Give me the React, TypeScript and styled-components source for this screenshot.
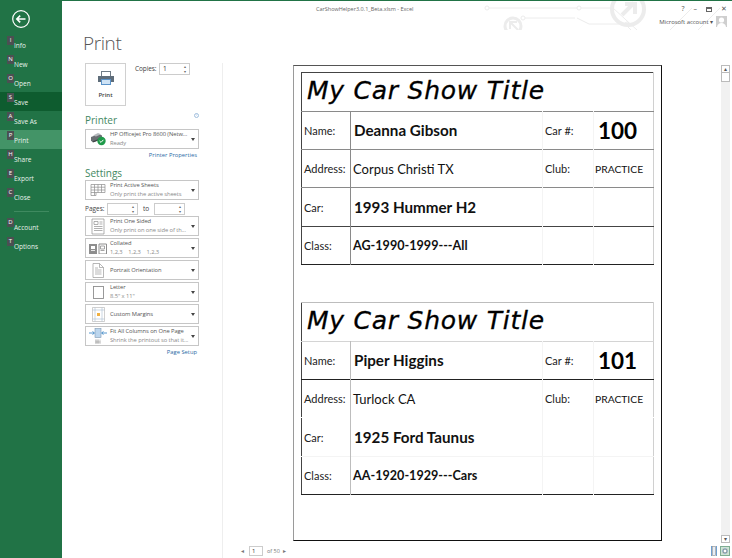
import React from "react";
import styled, { createGlobalStyle } from "styled-components";

const GlobalStyle = createGlobalStyle`
  html, body {
    margin: 0;
    padding: 0;
    background: #fff;
    overflow: hidden;
  }
  * {
    box-sizing: border-box;
  }
`;

const UI_FONT = `"Open Sans", "Noto Sans", sans-serif`;
const SHEET_FONT = `Lato, "Open Sans", sans-serif`;

const BackIcon = () => (
  <svg width="20" height="20" viewBox="0 0 20 20" fill="none" stroke="#fff">
    <circle cx="10" cy="10" r="8.3" strokeWidth="1.2" />
    <path d="M14.5 10H6M9.2 6.6 5.8 10l3.4 3.4" strokeWidth="1.6" />
  </svg>
);

const PrintIcon = () => (
  <svg width="16" height="14" viewBox="0 0 16 14">
    <rect x="3.5" y="0.5" width="9" height="5" fill="#fff" stroke="#6f7b86" />
    <path d="M0 5h16v6h-3V8.5H3V11H0z" fill="#5f6d7a" />
    <rect x="3.5" y="8.5" width="9" height="5" fill="#cfe3f5" stroke="#5b93c9" />
  </svg>
);

const DeviceIcon = () => (
  <svg width="17" height="14" viewBox="0 0 17 14">
    <path d="M1 5l8-3 3 1.5v3L4 10l-3-1z" fill="#6a6f73" />
    <path d="M3 3.5l5-2.5 3 1.3-5 2.2z" fill="#b5b9bc" />
    <path d="M2 9.5l8-3 1 1-8 3z" fill="#3f4447" />
    <circle cx="11.5" cy="9" r="4.2" fill="#1f9a4a" />
    <path d="M9.6 9l1.4 1.4 2.4-2.6" fill="none" stroke="#fff" strokeWidth="1" />
  </svg>
);

const SheetsIcon = () => (
  <svg width="16" height="14" viewBox="0 0 16 14" fill="none" stroke="#8c8c8c" strokeWidth="0.7">
    <path d="M1 1.5h14v8H6v3H1zM1 4.2h14M1 7h14M4.5 1.5v11M8 1.5v8M11.5 1.5v8M1 9.5h5" />
  </svg>
);

const OneSidedIcon = () => (
  <svg width="14" height="17" viewBox="0 0 14 17" fill="none" stroke="#8f8f8f" strokeWidth="0.7">
    <path d="M1 1h12v15H1z" />
    <path d="M3 3.5h4v3H3zM8.5 4h3M8.5 6h3M3 8.5h8.5M3 10.5h8.5M3 12.5h8.5" />
  </svg>
);

const CollatedIcon = () => (
  <svg width="18" height="11" viewBox="0 0 18 11">
    <path d="M0 1h8v10H0z" fill="#8e8e8e" />
    <path d="M2 3h4v3H2z" fill="#fff" />
    <path d="M10 1h7.5v10H10z" fill="#fff" stroke="#8e8e8e" />
    <path d="M11.5 3h4v3h-4zM11.5 7.5h4" fill="none" stroke="#8e8e8e" strokeWidth="0.8" />
    <path d="M2 7.5h4" stroke="#fff" strokeWidth="0.8" />
  </svg>
);

const PortraitIcon = () => (
  <svg width="12" height="15" viewBox="0 0 12 15" fill="none" stroke="#9a9a9a" strokeWidth="0.7">
    <path d="M1 .5h6.5l4 4v10H1zM7.5.5v4h4" />
    <path d="M3 5h3M3 7h6.5M3 9h6.5M3 11h6.5" />
  </svg>
);

const LetterIcon = () => (
  <svg width="11" height="13" viewBox="0 0 11 13" fill="none" stroke="#8f8f8f" strokeWidth="0.9">
    <rect x="0.5" y="0.5" width="10" height="12" />
  </svg>
);

const MarginsIcon = () => (
  <svg width="13" height="15" viewBox="0 0 13 15" fill="none" stroke="#a9bdd0" strokeWidth="0.6">
    <path d="M.5.5h12v14H.5z" stroke="#b0b0b0" />
    <path d="M3 .5v14M10 .5v14M.5 3h12M.5 12h12" />
    <rect x="5" y="6" width="3" height="3" fill="#f0b041" stroke="none" />
  </svg>
);

const FitIcon = () => (
  <svg width="18" height="17" viewBox="0 0 18 17" fill="none">
    <rect x="6" y="0.5" width="6" height="9" fill="#bcd6ee" stroke="#7d98b3" strokeWidth="0.6" />
    <path d="M0 5h5M3.5 3.5 5.5 5l-2 1.5M18 5h-5M14.5 3.5 12.5 5l2 1.5" stroke="#2f7fc1" strokeWidth="0.8" />
    <path d="M6 11.5h6V16H6z" fill="#e3e3e3" />
    <path d="M7 11.5v4M9 11.5v4M6.5 14h5" stroke="#8f8f8f" strokeWidth="0.5" />
  </svg>
);

const navTop = [
  { key: "I", label: "Info" },
  { key: "N", label: "New" },
  { key: "O", label: "Open" },
  { key: "S", label: "Save", state: "hover" },
  { key: "A", label: "Save As" },
  { key: "P", label: "Print", state: "active" },
  { key: "H", label: "Share" },
  { key: "E", label: "Export" },
  { key: "C", label: "Close" },
];

const navBottom = [
  { key: "D", label: "Account" },
  { key: "T", label: "Options" },
];

const settings = [
  { id: "sheets", icon: <SheetsIcon />, title: "Print Active Sheets", sub: "Only print the active sheets" },
  { id: "sided", icon: <OneSidedIcon />, title: "Print One Sided", sub: "Only print on one side of th..." },
  { id: "collated", icon: <CollatedIcon />, title: "Collated", sub: "1,2,3    1,2,3    1,2,3" },
  { id: "portrait", icon: <PortraitIcon />, title: "Portrait Orientation" },
  { id: "letter", icon: <LetterIcon />, title: "Letter", sub: '8.5" x 11"' },
  { id: "margins", icon: <MarginsIcon />, title: "Custom Margins" },
  { id: "fit", icon: <FitIcon />, title: "Fit All Columns on One Page", sub: "Shrink the printout so that it..." },
];

const DARK = "#444";
const MID = "#8a8a8a";
const LIGHT = "#d4d4d4";
const FAINT = "#f4f4f4";

const cards = [
  {
    name: "Deanna Gibson",
    number: "100",
    address: "Corpus Christi TX",
    car: "1993 Hummer H2",
    carClass: "AG-1990-1999---All",
    top: DARK,
    lines: [MID, MID, MID, DARK],
    nameCol: MID,
  },
  {
    name: "Piper Higgins",
    number: "101",
    address: "Turlock CA",
    car: "1925 Ford Taunus",
    carClass: "AA-1920-1929---Cars",
    top: "#bdbdbd",
    lines: [LIGHT, "#222", "#fff", FAINT],
    nameCol: "#bdbdbd",
  },
];

const columnWidths = [49, 192, 51, 60];

const App: React.FC = () => {
  return (
    <Window>
      <GlobalStyle />
      <Sidebar>
        <BackButton>
          <BackIcon />
        </BackButton>
        {navTop.map((item) => (
          <NavItem key={item.key} $state={item.state}>
            <KeyTip>{item.key}</KeyTip>
            {item.label}
          </NavItem>
        ))}
        <NavDivider />
        {navBottom.map((item) => (
          <NavItem key={item.key}>
            <KeyTip>{item.key}</KeyTip>
            {item.label}
          </NavItem>
        ))}
      </Sidebar>

      <Main>
        <TitleBar>
          <Circuit width="252" height="29" viewBox="0 0 252 29" fill="none" stroke="#ececec">
            <circle cx="7" cy="7" r="2" />
            <path d="M9 7h88" />
            <circle cx="99" cy="7" r="2" />
            <path d="M101 7h32l24 22" />
            <circle cx="33" cy="25" r="8" strokeWidth="3" />
            <path d="M30 28v-7h7M30 21l8 8" strokeWidth="2" />
            <circle cx="43" cy="17" r="2" />
            <path d="M45 17h50M97 17l12 6h36l6 6" />
            <circle cx="147" cy="23" r="2" />
            <circle cx="148" cy="8" r="16" strokeWidth="4" />
            <path d="M142 14l12-12M145 3h10v10" strokeWidth="4" />
            <path d="M190 29l22-22M218 29l22-22" />
          </Circuit>
          <FileName>CarShowHelper3.0.1_Beta.xlsm - Excel</FileName>
          <AccountArea>
            <WindowControls>
              <span>?</span>
              <span>–</span>
              <MaxBox />
              <span>✕</span>
            </WindowControls>
            <AccountRow>
              Microsoft account ▾
              <Avatar>
                <svg width="11" height="11" viewBox="0 0 11 11">
                  <rect width="11" height="11" fill="#cfcfcf" />
                  <circle cx="5.5" cy="4" r="2.6" fill="#fff" />
                  <path d="M1 11c.5-3 2.5-4 4.5-4s4 1 4.5 4z" fill="#fff" />
                </svg>
              </Avatar>
            </AccountRow>
          </AccountArea>
        </TitleBar>

        <PageTitle>Print</PageTitle>

        <Columns>
          <Panel>
            <PrintRow>
              <PrintButton>
                <PrintIcon />
                <span>Print</span>
              </PrintButton>
              <CopiesRow>
                <CopiesLabel>Copies:</CopiesLabel>
                <Spinner>1</Spinner>
              </CopiesRow>
            </PrintRow>

            <SectionHead>
              Printer
              <InfoDot>i</InfoDot>
            </SectionHead>
            <Dropdown>
              <DropIcon>
                <DeviceIcon />
              </DropIcon>
              <DropText>
                <DropTitle>HP Officejet Pro 8600 (Netw...</DropTitle>
                <DropSub>Ready</DropSub>
              </DropText>
              <Caret />
            </Dropdown>
            <PanelLink>Printer Properties</PanelLink>

            <SectionHead $tight>Settings</SectionHead>
            <DropList>
              {settings.map((item, index) => (
                <React.Fragment key={item.id}>
                  <Dropdown>
                    <DropIcon>{item.icon}</DropIcon>
                    <DropText>
                      <DropTitle>{item.title}</DropTitle>
                      {item.sub && <DropSub>{item.sub}</DropSub>}
                    </DropText>
                    <Caret />
                  </Dropdown>
                  {index === 0 && (
                    <PagesRow>
                      <PagesLabel>Pages:</PagesLabel>
                      <Spinner />
                      <ToLabel>to</ToLabel>
                      <Spinner />
                    </PagesRow>
                  )}
                </React.Fragment>
              ))}
            </DropList>
            <PanelLink>Page Setup</PanelLink>
          </Panel>

          <Preview>
            <PreviewBody>
              <PaperArea>
                <Paper>
                  {cards.map((card) => (
                    <Card key={card.number} $top={card.top}>
                      <colgroup>
                        {columnWidths.map((width, index) => (
                          <Column key={index} $width={width} />
                        ))}
                      </colgroup>
                      <tbody>
                        <tr>
                          <ShowTitle colSpan={4}>My Car Show Title</ShowTitle>
                        </tr>
                        <Row $line={card.lines[0]}>
                          <LabelCell $divider={card.nameCol}>Name:</LabelCell>
                          <StrongCell>{card.name}</StrongCell>
                          <SideLabel>Car #:</SideLabel>
                          <NumberCell>{card.number}</NumberCell>
                        </Row>
                        <Row $line={card.lines[1]}>
                          <LabelCell $divider={card.nameCol}>Address:</LabelCell>
                          <PlainCell>{card.address}</PlainCell>
                          <SideLabel>Club:</SideLabel>
                          <ClubCell>PRACTICE</ClubCell>
                        </Row>
                        <Row $line={card.lines[2]}>
                          <LabelCell $divider={card.nameCol}>Car:</LabelCell>
                          <StrongCell>{card.car}</StrongCell>
                          <SideLabel />
                          <ClubCell />
                        </Row>
                        <Row $line={card.lines[3]}>
                          <LabelCell $divider={card.nameCol}>Class:</LabelCell>
                          <ClassCell>{card.carClass}</ClassCell>
                          <SideLabel />
                          <ClubCell />
                        </Row>
                      </tbody>
                    </Card>
                  ))}
                </Paper>
              </PaperArea>
              <ScrollBar>
                <ScrollArrow>▴</ScrollArrow>
                <ScrollThumb />
                <ScrollTrack />
                <ScrollArrow>▾</ScrollArrow>
              </ScrollBar>
            </PreviewBody>
            <PreviewFooter>
              <Pager>
                <PagerArrow>◂</PagerArrow>
                <PagerInput>1</PagerInput>
                of 50
                <PagerArrow>▸</PagerArrow>
              </Pager>
              <ZoomTools>
                <svg width="6" height="10" viewBox="0 0 6 10" fill="none">
                  <path d="M.5 0v10M5.5 0v10" stroke="#6f9fd0" />
                  <rect x="1.5" y="0.5" width="3" height="9" fill="#e6eef7" stroke="#9a9a9a" strokeWidth="0.7" />
                </svg>
                <ZoomActive>
                  <svg width="6" height="6" viewBox="0 0 10 10" fill="none" stroke="#7c8a94" strokeWidth="1.5">
                    <rect x="2" y="2" width="6" height="6" fill="#fff" />
                    <path d="M5 0v2M5 8v2M0 5h2M8 5h2" stroke="#6f9fd0" />
                  </svg>
                </ZoomActive>
              </ZoomTools>
            </PreviewFooter>
          </Preview>
        </Columns>
      </Main>
    </Window>
  );
};

export default App;

const Window = styled.div`
  display: flex;
  width: 732px;
  height: 558px;
  overflow: hidden;
  background: #fff;
  font-family: ${UI_FONT};
  color: #444;
`;

const Sidebar = styled.nav`
  display: flex;
  flex-direction: column;
  flex: 0 0 62px;
  background: #217346;
`;

const BackButton = styled.div`
  display: flex;
  justify-content: center;
  align-items: center;
  width: 42px;
  height: 35px;
  padding-top: 3px;
`;

const NavItem = styled.div<{ $state?: string }>`
  position: relative;
  height: 19px;
  padding: 5px 0 0 14px;
  font-size: 6.5px;
  line-height: 12px;
  color: #e8f2ec;
  background: ${(props) =>
    props.$state === "hover" ? "#0e5c2f" : props.$state === "active" ? "#439467" : "transparent"};
`;

const KeyTip = styled.span`
  position: absolute;
  left: 7px;
  top: 1px;
  width: 7px;
  height: 9px;
  background: #4b5052;
  color: #fff;
  font-size: 6px;
  line-height: 8px;
  text-align: center;
`;

const NavDivider = styled.div`
  width: 35px;
  height: 1px;
  margin: 5px 0 5px 14px;
  background: #3f8a60;
`;

const Main = styled.div`
  flex: 1;
  display: flex;
  flex-direction: column;
  min-width: 0;
  border-top: 1px solid #217346;
`;

const TitleBar = styled.header`
  position: relative;
  flex: 0 0 29px;
  display: flex;
  justify-content: space-between;
  padding: 3px 4px 0 254px;
`;

const Circuit = styled.svg`
  position: absolute;
  right: 0;
  top: 0;
`;

const FileName = styled.div`
  position: relative;
  font-size: 5.5px;
  line-height: 10px;
  color: #666;
`;

const AccountArea = styled.div`
  position: relative;
  display: flex;
  flex-direction: column;
  align-items: flex-end;
`;

const WindowControls = styled.div`
  display: flex;
  align-items: center;
  gap: 9px;
  height: 10px;
  padding-right: 1px;
  font-size: 7px;
  line-height: 10px;
  color: #555;
`;

const MaxBox = styled.span`
  width: 6px;
  height: 5px;
  border: 1px solid #666;
  border-top-width: 2px;
`;

const AccountRow = styled.div`
  display: flex;
  align-items: center;
  gap: 3px;
  margin-top: 2px;
  font-size: 6px;
  letter-spacing: -0.05px;
  color: #555;
`;

const Avatar = styled.span`
  display: flex;
  margin-right: 1px;
`;

const PageTitle = styled.h1`
  flex: 0 0 33px;
  margin: 0;
  padding: 0 0 0 21px;
  font-size: 19px;
  font-weight: 300;
  letter-spacing: -0.4px;
  line-height: 26px;
  color: #555;
`;

const Columns = styled.div`
  flex: 1;
  display: flex;
  min-height: 0;
`;

const Panel = styled.aside`
  flex: 0 0 160px;
  padding: 0 23px;
`;

const PrintRow = styled.div`
  display: flex;
  gap: 9px;
`;

const PrintButton = styled.div`
  display: flex;
  flex-direction: column;
  align-items: center;
  width: 41px;
  height: 43px;
  padding-top: 7px;
  border: 1px solid #d0d0d0;
  font-size: 6px;
  font-weight: 600;
  span {
    margin-top: 6px;
  }
`;

const CopiesRow = styled.div`
  display: flex;
  align-items: flex-start;
  font-size: 6.5px;
  line-height: 12px;
`;

const CopiesLabel = styled.span`
  width: 24px;
  letter-spacing: -0.1px;
`;

const Spinner = styled.div`
  position: relative;
  width: 31px;
  height: 12px;
  padding-left: 3px;
  border: 1px solid #ccc;
  background: #fff;
  font-size: 6.5px;
  line-height: 10px;
  color: #333;
  &::after {
    content: "▴\\A▾";
    white-space: pre;
    position: absolute;
    right: 1px;
    top: 0;
    width: 6px;
    font-size: 4px;
    line-height: 5px;
    text-align: center;
    color: #666;
  }
`;

const SectionHead = styled.h2<{ $tight?: boolean }>`
  position: relative;
  margin: ${(props) => (props.$tight ? "4px" : "6px")} 0 0;
  height: ${(props) => (props.$tight ? "14px" : "17px")};
  font-size: 10px;
  font-weight: 400;
  line-height: ${(props) => (props.$tight ? "14px" : "16px")};
  color: #217346;
  opacity: 0.85;
`;

const InfoDot = styled.span`
  position: absolute;
  right: 0;
  top: 1px;
  width: 5px;
  height: 5px;
  border: 1px solid #8fb4d8;
  border-radius: 50%;
  font-size: 3px;
  line-height: 3px;
  text-align: center;
  color: #5b93c9;
`;

const DropList = styled.div`
  display: flex;
  flex-direction: column;
  gap: 2px;
`;

const Dropdown = styled.div`
  display: flex;
  align-items: center;
  width: 114px;
  height: 20px;
  border: 1px solid #c6c6c6;
  background: #fff;
`;

const DropIcon = styled.div`
  flex: 0 0 24px;
  display: flex;
  justify-content: center;
  align-items: center;
`;

const DropText = styled.div`
  flex: 1;
  min-width: 0;
  white-space: nowrap;
`;

const DropTitle = styled.div`
  font-size: 5.8px;
  letter-spacing: -0.08px;
  line-height: 9px;
  color: #555;
`;

const DropSub = styled.div`
  font-size: 5.8px;
  letter-spacing: -0.08px;
  line-height: 9px;
  white-space: pre;
  color: #8a8a8a;
`;

const Caret = styled.span`
  flex: 0 0 auto;
  width: 0;
  height: 0;
  margin: 0 3px 0 2px;
  border-left: 2.5px solid transparent;
  border-right: 2.5px solid transparent;
  border-top: 3px solid #444;
`;

const PanelLink = styled.div`
  width: 112px;
  height: 12px;
  margin-top: 1px;
  font-size: 5.8px;
  line-height: 11px;
  text-align: right;
  color: #2b6aa5;
`;

const PagesRow = styled.div`
  display: flex;
  align-items: center;
  height: 11px;
  margin: 1px 0 0;
  font-size: 6.5px;
`;

const PagesLabel = styled.span`
  width: 22px;
`;

const ToLabel = styled.span`
  width: 16px;
  text-align: center;
`;

const Preview = styled.section`
  flex: 1;
  display: flex;
  flex-direction: column;
  min-width: 0;
  border-left: 1px solid #eee;
`;

const PreviewBody = styled.div`
  flex: 1;
  display: flex;
  min-height: 0;
  padding-top: 2px;
`;

const PaperArea = styled.div`
  flex: 1;
  padding-left: 70px;
`;

const Paper = styled.div`
  display: flex;
  flex-direction: column;
  gap: 37px;
  width: 369px;
  height: 476px;
  padding: 6px 0 0 7px;
  border: 1px solid #111;
  border-left-color: #9a9a9a;
  border-top-color: #555;
`;

const Card = styled.table<{ $top: string }>`
  width: 352px;
  border-collapse: collapse;
  table-layout: fixed;
  font-family: ${SHEET_FONT};
  color: #111;
  border-top: 1px solid ${(props) => props.$top};
  border-left: 1px solid #444;
  border-right: 1px solid #d0d0d0;
`;

const Column = styled.col<{ $width: number }>`
  width: ${(props) => props.$width}px;
`;

const ShowTitle = styled.td`
  height: 39px;
  padding: 0 0 2px 5px;
  font-family: "DejaVu Sans", sans-serif;
  font-size: 25px;
  font-style: italic;
  letter-spacing: 0.75px;
  line-height: 34px;
  white-space: nowrap;
  color: #000;
  -webkit-text-stroke: 0.3px #000;
`;

const Row = styled.tr<{ $line: string }>`
  height: 38px;
  border-top: 1px solid ${(props) => props.$line};
  &:nth-child(4) {
    height: 39px;
  }
  &:last-child {
    border-bottom: 1px solid #222;
  }
`;

const LabelCell = styled.td<{ $divider: string }>`
  padding: 0 0 0 2px;
  font-size: 11px;
  white-space: nowrap;
  color: #222;
  border-right: 1px solid ${(props) => props.$divider};
`;

const StrongCell = styled.td`
  padding: 0 0 1px 3px;
  font-size: 15.2px;
  font-weight: 700;
  white-space: nowrap;
`;

const PlainCell = styled.td`
  padding: 0 0 0 2px;
  font-size: 13px;
  white-space: nowrap;
`;

const ClassCell = styled.td`
  padding: 0 0 0 2px;
  font-size: 12.6px;
  font-weight: 700;
  white-space: nowrap;
`;

const SideLabel = styled.td`
  padding: 0 0 0 2px;
  font-size: 11px;
  color: #222;
  border-left: 1px solid ${FAINT};
`;

const NumberCell = styled.td`
  padding: 0 0 0 4px;
  font-size: 22.5px;
  font-weight: 700;
  line-height: 30px;
  color: #000;
  border-left: 1px solid ${FAINT};
`;

const ClubCell = styled.td`
  padding: 0 0 0 1px;
  font-size: 10.3px;
  white-space: nowrap;
  border-left: 1px solid ${FAINT};
`;

const ScrollBar = styled.div`
  flex: 0 0 auto;
  display: flex;
  flex-direction: column;
  width: 9px;
  margin-right: 2px;
`;

const ScrollArrow = styled.div`
  height: 8px;
  border: 1px solid #bbb;
  font-size: 6px;
  line-height: 6px;
  text-align: center;
  color: #555;
`;

const ScrollThumb = styled.div`
  height: 9px;
  border: 1px solid #bbb;
  border-top: 0;
`;

const ScrollTrack = styled.div`
  flex: 1;
  background: #f1f1f1;
`;

const PreviewFooter = styled.footer`
  flex: 0 0 15px;
  display: flex;
  justify-content: space-between;
  align-items: center;
  padding: 0 2px 0 18px;
`;

const Pager = styled.div`
  display: flex;
  align-items: center;
  gap: 3px;
  font-size: 5.5px;
  color: #777;
`;

const PagerArrow = styled.span`
  font-size: 6px;
  color: #777;
`;

const PagerInput = styled.span`
  width: 14px;
  height: 10px;
  margin: 0 1px 0 2px;
  padding-left: 2px;
  border: 1px solid #ccc;
  font-size: 6px;
  line-height: 8px;
  color: #333;
`;

const ZoomTools = styled.div`
  display: flex;
  align-items: center;
  gap: 3px;
`;

const ZoomActive = styled.span`
  display: flex;
  padding: 1px;
  border: 1px solid #7fae93;
  background: #cfe3d6;
`;
